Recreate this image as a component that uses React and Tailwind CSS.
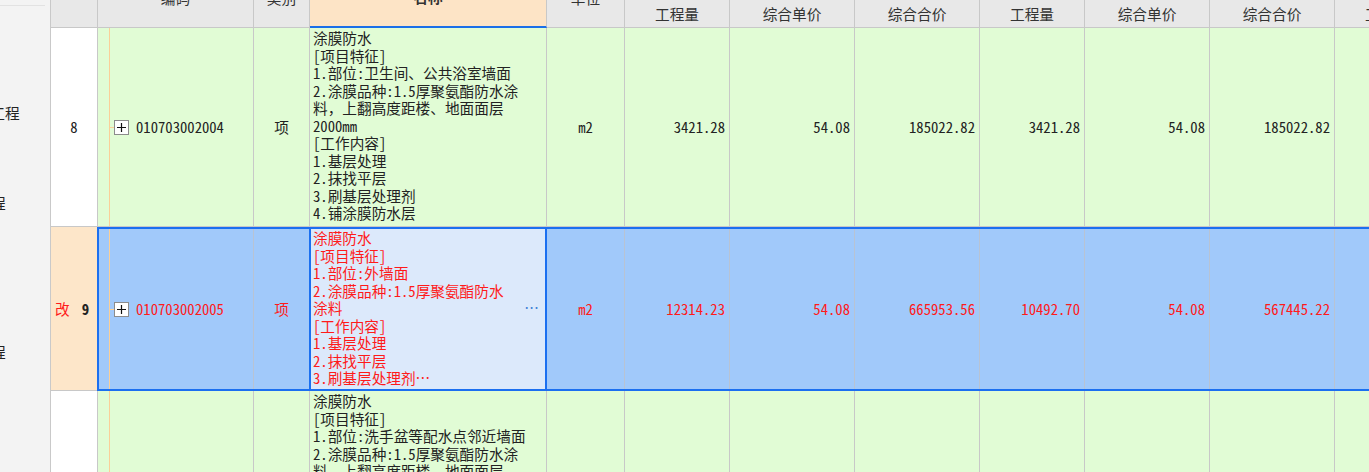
const GRID = 'border-[#c8c8c8]'

const groupCols = [
  { label: '工程量', w: 'w-[105px]' },
  { label: '综合单价', w: 'w-[125px]' },
  { label: '综合合价', w: 'w-[125px]' },
]

const rows = [
  {
    no: '8',
    code: '010703002004',
    unit: 'm2',
    nums: ['3421.28', '54.08', '185022.82', '3421.28', '54.08', '185022.82'],
    name: [
      '涂膜防水',
      '[项目特征]',
      '1.部位:卫生间、公共浴室墙面',
      '2.涂膜品种:1.5厚聚氨酯防水涂',
      '料，上翻高度距楼、地面面层',
      '2000mm',
      '[工作内容]',
      '1.基层处理',
      '2.抹找平层',
      '3.刷基层处理剂',
      '4.铺涂膜防水层',
    ],
  },
  {
    no: '9',
    code: '010703002005',
    unit: 'm2',
    nums: ['12314.23', '54.08', '665953.56', '10492.70', '54.08', '567445.22'],
    name: [
      '涂膜防水',
      '[项目特征]',
      '1.部位:外墙面',
      '2.涂膜品种:1.5厚聚氨酯防水',
      '涂料',
      '[工作内容]',
      '1.基层处理',
      '2.抹找平层',
      '3.刷基层处理剂…',
    ],
  },
  {
    no: '',
    code: '',
    unit: '',
    nums: ['', '', '', '', '', ''],
    name: [
      '涂膜防水',
      '[项目特征]',
      '1.部位:洗手盆等配水点邻近墙面',
      '2.涂膜品种:1.5厚聚氨酯防水涂',
      '料，上翻高度距楼、地面面层',
      '2000mm',
    ],
  },
]

const numWidths = ['w-[105px]', 'w-[125px]', 'w-[125px]', 'w-[105px]', 'w-[125px]', 'w-[125px]', 'w-[105px]']

// ascii runs get half-width glyphs, like the old song-ti grid font
function Txt({ children }) {
  const parts = String(children).split(/([\x20-\x7e]+)/)
  return parts.map((p, i) =>
    /^[\x20-\x7e]+$/.test(p) ? (
      <span key={i} className="[font-feature-settings:'hwid']">{p}</span>
    ) : (
      p
    )
  )
}

function PlusBox() {
  return (
    <span className="flex h-[15px] w-[15px] shrink-0 items-center justify-center border border-[#8c8c8c] bg-white">
      <svg width="9" height="9" viewBox="0 0 9 9">
        <path d="M0 4.5H9M4.5 0V9" stroke="#111" strokeWidth="1.2" />
      </svg>
    </span>
  )
}

function CodeCell({ code, red, offset, className }) {
  return (
    <div className={`flex h-full shrink-0 ${className}`}>
      <div className={offset} />
      <div className="h-full w-px bg-[#fbcf98]" />
      {code && (
        <div className="flex items-center">
          <span className="h-px w-[4px] bg-[#fbcf98]" />
          <PlusBox />
          <span className={`ml-[7px] ${red ? 'text-[#ff1a1a]' : ''}`}>
            <Txt>{code}</Txt>
          </span>
        </div>
      )}
    </div>
  )
}

function HeaderRow() {
  return (
    <div className="h-[28px] shrink-0 overflow-hidden">
      <div className="-mt-[27px] flex h-[55px] bg-[#e8e8e8] text-[#333]">
        <div className={`h-full w-[47px] shrink-0 border-r border-b ${GRID}`} />
        <div className={`flex h-full w-[156px] shrink-0 items-center justify-center border-r border-b pb-[5px] ${GRID}`}>编码</div>
        <div className={`flex h-full w-[56px] shrink-0 items-center justify-center border-r border-b pb-[5px] ${GRID}`}>类别</div>
        <div className="flex h-full w-[237px] shrink-0 items-center justify-center border-r border-b-2 border-r-[#c8c8c8] border-b-[#1b6fe8] bg-[#fde4c6] pb-[5px] font-bold">名称</div>
        <div className={`flex h-full w-[78px] shrink-0 items-center justify-center border-r border-b pb-[5px] ${GRID}`}>单位</div>
        {['招标控制价', '投标报价', '工程量清单'].map((g) => (
          <div key={g} className="flex w-[355px] shrink-0 flex-col">
            <div className={`flex h-[27px] items-center justify-center border-r border-b ${GRID}`}>{g}</div>
            <div className="flex h-[28px]">
              {groupCols.map((c) => (
                <div key={c.label} className={`flex ${c.w} shrink-0 items-center justify-center border-r border-b ${GRID}`}>
                  {c.label}
                </div>
              ))}
            </div>
          </div>
        ))}
      </div>
    </div>
  )
}

function PlainRow({ row, height }) {
  return (
    <div className={`flex ${height} shrink-0`}>
      <div className={`flex w-[47px] shrink-0 items-center justify-center border-r border-b bg-white ${GRID}`}>
        <Txt>{row.no}</Txt>
      </div>
      <div className="flex bg-[#e1fcd5]">
        <CodeCell code={row.code} offset="w-[11px]" className={`w-[156px] border-r border-b ${GRID}`} />
        <div className={`flex w-[56px] shrink-0 items-center justify-center border-r border-b ${GRID}`}>{row.code && '项'}</div>
        <div className={`w-[237px] shrink-0 overflow-hidden border-r border-b pt-[1px] pl-[3px] ${GRID}`}>
          {row.name.map((l, i) => (
            <div key={i} className="whitespace-nowrap">
              <Txt>{l}</Txt>
            </div>
          ))}
        </div>
        <div className={`flex w-[78px] shrink-0 items-center justify-center border-r border-b ${GRID}`}>
          <Txt>{row.unit}</Txt>
        </div>
        {row.nums.concat(['']).map((n, i) => (
          <div key={i} className={`flex ${numWidths[i]} shrink-0 items-center justify-end border-r border-b pr-[4px] ${GRID}`}>
            <Txt>{n}</Txt>
          </div>
        ))}
      </div>
    </div>
  )
}

function SelectedRow({ row }) {
  const line = 'border-[#b8c3d3]'
  return (
    <div className="flex h-[164px] shrink-0">
      <div className={`flex w-[46px] shrink-0 items-center border-b bg-[#fde6c9] pl-[4px] ${GRID}`}>
        <span className="text-[#ff1a1a]">改</span>
        <span className="ml-[12px] font-bold">
          <Txt>{row.no}</Txt>
        </span>
      </div>
      <div className="flex border-y-2 border-l-2 border-[#1b6ff0] bg-[#a1c9fa] text-[#ff1a1a]">
        <CodeCell code={row.code} red offset="w-[10px]" className={`w-[155px] border-r ${line}`} />
        <div className="flex w-[55px] shrink-0 items-center justify-center">项</div>
        <div className="flex w-[238px] shrink-0 border-x-2 border-[#1b6ff0] bg-[#dce9fb]">
          <div className="min-w-0 flex-1 pl-[2px]">
            {row.name.map((l, i) => (
              <div key={i} className="whitespace-nowrap">
                <Txt>{l}</Txt>
              </div>
            ))}
          </div>
          <div className="flex shrink-0 items-center pr-[6px] pb-[2px] text-[#3d7fd6]">…</div>
        </div>
        <div className={`flex w-[78px] shrink-0 items-center justify-center border-r ${line}`}>
          <Txt>{row.unit}</Txt>
        </div>
        {row.nums.concat(['']).map((n, i) => (
          <div key={i} className={`flex ${numWidths[i]} shrink-0 items-center justify-end border-r pr-[4px] ${line}`}>
            <Txt>{n}</Txt>
          </div>
        ))}
      </div>
    </div>
  )
}

function SidePanel() {
  return (
    <div className="flex w-[51px] shrink-0 flex-col overflow-hidden border-r border-[#c9c9c9] bg-[#f3f3f3] text-[#222]">
      <div className="mt-[5px] h-px w-[45px] shrink-0 bg-[#e2e2e2]" />
      <div className="-ml-[39px] mt-[98px] whitespace-nowrap">安装工程</div>
      <div className="-ml-[53px] mt-[72px] whitespace-nowrap">土建工程</div>
      <div className="-ml-[53px] mt-[132px] whitespace-nowrap">装饰工程</div>
    </div>
  )
}

export default function App() {
  return (
    <div className="flex h-[472px] w-[1369px] overflow-hidden bg-white font-['Noto_Sans_CJK_SC',sans-serif] text-[14.67px] leading-[17.5px] text-[#222]">
      <SidePanel />
      <div className="flex min-w-0 flex-1 flex-col overflow-hidden">
        <HeaderRow />
        <PlainRow row={rows[0]} height="h-[199px]" />
        <SelectedRow row={rows[1]} />
        <PlainRow row={rows[2]} height="h-[200px]" />
      </div>
    </div>
  )
}
